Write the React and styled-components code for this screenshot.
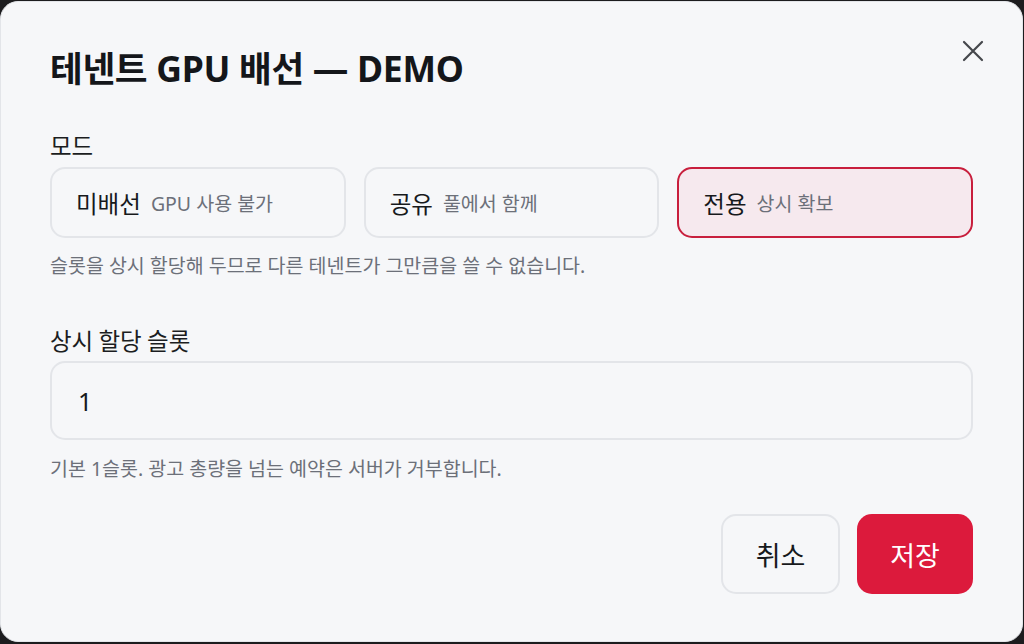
import styled, { createGlobalStyle } from "styled-components";

const GlobalStyle = createGlobalStyle`
  html, body {
    margin: 0;
    padding: 0;
    background: #1c1c1e;
  }
  body {
    font-family: "Noto Sans", "Noto Sans CJK KR", sans-serif;
  }
  * {
    box-sizing: border-box;
  }
`;

const Dialog = styled.div`
  width: 1023px;
  height: 641px;
  margin: 1px 0 0 0;
  background: #f6f7f9;
  border: 1px solid #e3e5e9;
  border-radius: 18px;
  padding: 45px 49px 0 49px;
  display: flex;
  flex-direction: column;
`;

const Header = styled.div`
  display: flex;
  justify-content: space-between;
  align-items: flex-start;
  margin-bottom: 41px;
`;

const Title = styled.h2`
  margin: 0;
  font-family: "Noto Sans", "Noto Sans CJK KR", sans-serif;
  font-size: 35.6px;
  line-height: 42px;
  font-weight: 700;
  color: #14161a;
  letter-spacing: -0.3px;
`;

const CloseButton = styled.button`
  width: 32px;
  height: 32px;
  margin: -12px -16px 0 0;
  padding: 0;
  border: none;
  background: transparent;
  display: flex;
  align-items: center;
  justify-content: center;
  color: #45474c;
  cursor: pointer;
`;

const Label = styled.div`
  font-family: "Noto Sans CJK KR", sans-serif;
  font-size: 23.5px;
  line-height: 30px;
  color: #1b1d21;
  margin-bottom: ${(p) => p.$gap || 6}px;
`;

const ModeGrid = styled.div`
  display: grid;
  grid-template-columns: repeat(3, 1fr);
  gap: 18px;
`;

const ModeCard = styled.button`
  height: 71px;
  display: flex;
  align-items: center;
  gap: 10px;
  padding: 0 24px;
  border-radius: 15px;
  border: ${(p) => (p.$active ? "2px solid #c81f3d" : "2px solid #e3e5e9")};
  background: ${(p) => (p.$active ? "#f6e9ee" : "#f6f7f9")};
  font-family: "Noto Sans", "Noto Sans CJK KR", sans-serif;
  cursor: pointer;
  text-align: left;
`;

const ModeName = styled.span`
  font-family: "Noto Sans CJK KR", sans-serif;
  font-size: 23.5px;
  color: #17191c;
`;

const ModeHint = styled.span`
  font-size: 19.5px;
  color: #6c7079;
`;

const Help = styled.p`
  margin: ${(p) => p.$top || 15}px 0 0 0;
  font-family: "Noto Sans", "Noto Sans CJK KR", sans-serif;
  font-size: 19.5px;
  line-height: 26px;
  color: #6c7079;
`;

const Field = styled.div`
  margin-top: 46px;
`;

const Input = styled.input`
  width: 100%;
  height: 79px;
  padding: 0 26px;
  border: 2px solid #e3e5e9;
  border-radius: 15px;
  background: #f6f7f9;
  font-family: "Noto Sans", "Noto Sans CJK KR", sans-serif;
  font-size: 25px;
  color: #17191c;
  outline: none;
`;

const Footer = styled.div`
  display: flex;
  justify-content: flex-end;
  gap: 17px;
  margin-top: 32px;
`;

const Button = styled.button`
  height: 80px;
  min-width: ${(p) => (p.$primary ? 116 : 119)}px;
  padding: 0 28px;
  border-radius: 15px;
  border: ${(p) => (p.$primary ? "none" : "2px solid #e3e5e9")};
  background: ${(p) => (p.$primary ? "#dc1a3c" : "#f6f7f9")};
  color: ${(p) => (p.$primary ? "#ffffff" : "#17191c")};
  font-family: "Noto Sans CJK KR", sans-serif;
  font-size: 27px;
  cursor: pointer;
`;

const modes = [
  { key: "none", name: "미배선", hint: "GPU 사용 불가" },
  { key: "shared", name: "공유", hint: "풀에서 함께" },
  { key: "dedicated", name: "전용", hint: "상시 확보" },
];

export default function App() {
  const selected = "dedicated";
  return (
    <>
      <GlobalStyle />
      <Dialog>
        <Header>
          <Title>테넨트 GPU 배선 — DEMO</Title>
          <CloseButton aria-label="닫기">
            <svg width="22" height="22" viewBox="0 0 22 22">
              <path
                d="M2 2 L20 20 M20 2 L2 20"
                stroke="currentColor"
                strokeWidth="2.2"
                strokeLinecap="round"
              />
            </svg>
          </CloseButton>
        </Header>

        <Label $gap={7}>모드</Label>
        <ModeGrid>
          {modes.map((m) => (
            <ModeCard key={m.key} $active={m.key === selected}>
              <ModeName>{m.name}</ModeName>
              <ModeHint>{m.hint}</ModeHint>
            </ModeCard>
          ))}
        </ModeGrid>
        <Help>슬롯을 상시 할당해 두므로 다른 테넨트가 그만큼을 쓸 수 없습니다.</Help>

        <Field>
          <Label>상시 할당 슬롯</Label>
          <Input defaultValue="1" />
          <Help $top={16}>기본 1슬롯. 광고 총량을 넘는 예약은 서버가 거부합니다.</Help>
        </Field>

        <Footer>
          <Button>취소</Button>
          <Button $primary>저장</Button>
        </Footer>
      </Dialog>
    </>
  );
}
